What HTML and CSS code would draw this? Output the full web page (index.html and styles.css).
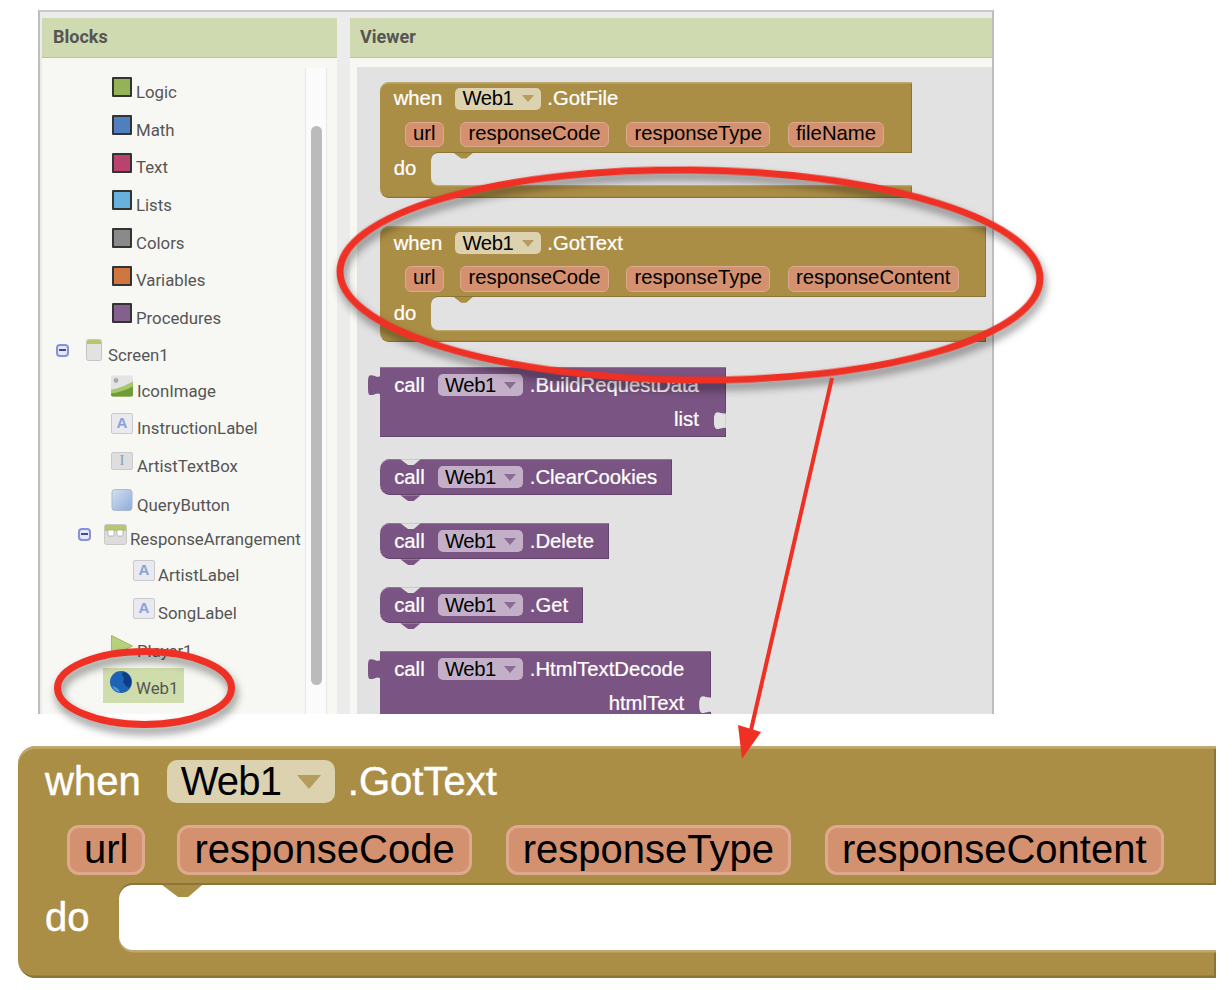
FILE: index.html
```html
<!DOCTYPE html>
<html>
<head>
<meta name="viewport" content="width=device-width, initial-scale=1.0">
<title>Web1 blocks</title>
<link rel="stylesheet" href="styles.css">
</head>
<body>

<div class="page">

  <div class="frame">

    <!--left panel with the component tree-->
    <section class="panel panel-blocks">
      <h2 class="panel-title">Blocks</h2>
      <div class="panel-body tree-wrap">
        <div class="tree">
          <div class="tree-group">
            <div class="tree-row lvl-3"><span class="swatch sw-logic"></span><span class="tree-label">Logic</span></div>
            <div class="tree-row lvl-3"><span class="swatch sw-math"></span><span class="tree-label">Math</span></div>
            <div class="tree-row lvl-3"><span class="swatch sw-text"></span><span class="tree-label">Text</span></div>
            <div class="tree-row lvl-3"><span class="swatch sw-lists"></span><span class="tree-label">Lists</span></div>
            <div class="tree-row lvl-3"><span class="swatch sw-colors"></span><span class="tree-label">Colors</span></div>
            <div class="tree-row lvl-3"><span class="swatch sw-vars"></span><span class="tree-label">Variables</span></div>
            <div class="tree-row lvl-3"><span class="swatch sw-procs"></span><span class="tree-label">Procedures</span></div>
          </div>
          <div class="tree-group tree-group-screen">
            <div class="tree-row lvl-1"><span class="minus minus-wide"></span>
              <svg class="ico ico-screen" viewBox="0 0 16 22"><rect x="0.5" y="0.5" width="15" height="21" rx="2" fill="#e2e2e2" stroke="#c4c4c4"/><path d="M1 5V2.5Q1 1 2.5 1h11Q15 1 15 2.5V5z" fill="#b5c96a"/></svg>
              <span class="tree-label label-screen">Screen1</span></div>
            <div class="tree-row lvl-3">
              <svg class="ico" viewBox="0 0 22 21"><rect width="22" height="21" rx="2" fill="#e4e4e4"/><circle cx="5" cy="5" r="2.4" fill="#a8a8a8"/><path d="M0 14Q9 13 22 6V19Q22 21 20 21H2Q0 21 0 19z" fill="#a6c76c"/><path d="M0 18Q10 17 22 11V19Q22 21 20 21H2Q0 21 0 19z" fill="#6f9a35"/></svg>
              <span class="tree-label">IconImage</span></div>
            <div class="tree-row lvl-3 pitch-37"><span class="letter-ico">A</span><span class="tree-label">InstructionLabel</span></div>
            <div class="tree-row lvl-3 pitch-38"><span class="letter-ico letter-box">I</span><span class="tree-label">ArtistTextBox</span></div>
            <div class="tree-row lvl-3 pitch-39">
              <svg class="ico" viewBox="0 0 22 23"><defs><linearGradient id="btn" x1="0" y1="0" x2="1" y2="1"><stop offset="0" stop-color="#d5e0f2"/><stop offset="1" stop-color="#8fabd8"/></linearGradient></defs><rect x="0.5" y="0.5" width="21" height="22" rx="3" fill="url(#btn)" stroke="#a9b9d2"/></svg>
              <span class="tree-label">QueryButton</span></div>
            <div class="tree-row lvl-2 pitch-34"><span class="minus"></span>
              <svg class="ico ico-arrange" viewBox="0 0 23 21"><rect x="0.5" y="0.5" width="22" height="20" rx="2" fill="#dcdcdc" stroke="#c8c8c8"/><path d="M1 7V2.5Q1 1 2.5 1h18Q22 1 22 2.5V7z" fill="#b4c96c"/><rect x="4" y="6" width="6" height="6" rx="1" fill="#fff" stroke="#999" stroke-width="0.6"/><rect x="13" y="6" width="6" height="6" rx="1" fill="#fff" stroke="#999" stroke-width="0.6"/></svg>
              <span class="tree-label label-tight">ResponseArrangement</span></div>
            <div class="tree-row lvl-4"><span class="letter-ico">A</span><span class="tree-label label-tight">ArtistLabel</span></div>
            <div class="tree-row lvl-4 pitch-38"><span class="letter-ico">A</span><span class="tree-label label-tight">SongLabel</span></div>
            <div class="tree-row lvl-3 pitch-38">
              <svg class="ico" viewBox="0 0 22 22"><path d="M0.5 0.5L21.5 11L0.5 21.5z" fill="#b7d07c" stroke="#a2b86a"/></svg>
              <span class="tree-label">Player1</span></div>
            <div class="tree-row lvl-sel pitch-37">
              <div class="tree-selected">
                <svg class="ico" viewBox="0 0 22 22"><circle cx="11" cy="11" r="11" fill="#1e63b4"/><path d="M13 0.5Q19 2 21 8Q22 13 19 17Q15 15 13 11Q15 7 12 4z" fill="#0d3f86"/><path d="M2 15Q8 16 10 21Q5 21 2 15z" fill="#4f97de"/></svg>
                <span class="tree-label">Web1</span>
              </div>
            </div>
          </div>
        </div>
        <div class="scroll-track"><div class="scroll-thumb"></div></div>
      </div>
    </section>

    <!--right panel with the blocks-->
    <section class="panel panel-viewer">
      <h2 class="panel-title">Viewer</h2>
      <div class="panel-body viewer-body">
        <div class="workspace">

          <div class="block when">
            <div class="row row-head"><span class="kw">when</span><span class="drop">Web1<i class="caret"></i></span><span class="kw meth">.GotFile</span></div>
            <div class="row row-args"><span class="pill pill-first">url</span><span class="pill">responseCode</span><span class="pill">responseType</span><span class="pill">fileName</span></div>
            <div class="row row-do"><span class="kw">do</span><div class="well"></div></div>
          </div>

          <div class="block when">
            <div class="row row-head"><span class="kw">when</span><span class="drop">Web1<i class="caret"></i></span><span class="kw meth">.GotText</span></div>
            <div class="row row-args"><span class="pill pill-first">url</span><span class="pill">responseCode</span><span class="pill">responseType</span><span class="pill">responseContent</span></div>
            <div class="row row-do"><span class="kw">do</span><div class="well"></div></div>
          </div>

          <div class="block call value first-call">
            <div class="row row-call"><span class="kw">call</span><span class="drop">Web1<i class="caret"></i></span><span class="kw meth">.BuildRequestData</span></div>
            <div class="row row-param"><span class="kw">list</span><i class="socket"></i></div>
          </div>

          <div class="block call stmt clear-call">
            <div class="row row-call"><span class="kw">call</span><span class="drop">Web1<i class="caret"></i></span><span class="kw meth">.ClearCookies</span></div>
          </div>

          <div class="block call stmt">
            <div class="row row-call"><span class="kw">call</span><span class="drop">Web1<i class="caret"></i></span><span class="kw meth">.Delete</span></div>
          </div>

          <div class="block call stmt">
            <div class="row row-call"><span class="kw">call</span><span class="drop">Web1<i class="caret"></i></span><span class="kw meth">.Get</span></div>
          </div>

          <div class="block call value">
            <div class="row row-call"><span class="kw">call</span><span class="drop">Web1<i class="caret"></i></span><span class="kw meth">.HtmlTextDecode</span></div>
            <div class="row row-param"><span class="kw">htmlText</span><i class="socket"></i></div>
          </div>

        </div>
      </div>
    </section>

  </div>

  <!--the enlarged copy of the GotText block-->
  <div class="block when big">
    <div class="row row-head"><span class="kw">when</span><span class="drop">Web1<i class="caret"></i></span><span class="kw meth">.GotText</span></div>
    <div class="row row-args"><span class="pill pill-first">url</span><span class="pill">responseCode</span><span class="pill">responseType</span><span class="pill">responseContent</span></div>
    <div class="row row-do"><span class="kw">do</span><div class="well"></div></div>
  </div>

  <!--red annotations drawn over everything-->
  <svg class="marks" viewBox="0 0 1232 990">
    <g class="mark-shadow" fill="none" stroke="#ee3124" stroke-width="7">
      <ellipse cx="690" cy="275" rx="350" ry="105" transform="rotate(0.6 690 275)"/>
      <ellipse cx="144.500" cy="688" rx="87" ry="36.500"/>
    </g>
    <path d="M832 378L751 730" fill="none" stroke="#ee3124" stroke-width="4"/>
    <path d="M742 759L738 725L761 732z" fill="#ee3124"/>
  </svg>

</div>

</body>
</html>
```

FILE: styles.css
```css
* {box-sizing: border-box;}

body {
  margin: 0;
  background: #fff;
  font-family: "Liberation Sans", Arial, sans-serif;
}

.page {
  position: relative;
  width: 1232px;
  height: 990px;
  padding-top: 10px;
  overflow: hidden;
}

/*outer frame and the two panels*/

.frame {
  display: flex;
  gap: 13px;
  width: 956px;
  height: 704px;
  margin-left: 38px;
  padding: 6px 0 0 2px;
  background: #ececec;
  border-top: 2px solid #c9c9c9;
  border-left: 2px solid #bdbdbd;
  border-right: 2px solid #bdbdbd;
  overflow: hidden;
}

.panel {
  display: flex;
  flex-direction: column;
}

.panel-blocks {
  width: 295px;
}

.panel-viewer {
  width: 642px;
}

.panel-title {
  flex: none;
  height: 40px;
  margin: 0;
  padding-left: 11px;
  background: #d0dab0;
  border-bottom: 1px solid #bcc2aa;
  color: #555;
  font: bold 18px/37px Roboto, sans-serif;
}

.panel-viewer .panel-title {
  padding-left: 10px;
}

.panel-body {
  flex: 1;
  min-height: 0;
  background: #f7f8f3;
}

/*component tree*/

.tree-wrap {
  display: flex;
  padding-right: 10px;
}

.tree {
  flex: 1;
  padding-top: 10.500px;
}

.tree-row {
  display: flex;
  align-items: center;
  gap: 4px;
  height: 37.7px;
}

.tree-group-screen .tree-row {
  height: 36px;
}

/*the rows of the screen list are not evenly spaced*/
.pitch-34 {margin-top: -2px;}
.pitch-37 {margin-top: 1px;}
.pitch-38 {margin-top: 2px;}
.pitch-39 {margin-top: 3px;}

.lvl-1 {padding-left: 14px;}
.lvl-2 {padding-left: 36px;}
.lvl-3 {padding-left: 70px;}
.lvl-4 {padding-left: 92px;}
.lvl-sel {padding-left: 61px;}

.tree-label {
  margin-top: 9px;
  color: #555;
  font: 16.800px/20px Roboto, sans-serif;
  white-space: nowrap;
}

.label-screen {
  margin-left: 2px;
}

.label-tight {
  margin-left: -1px;
}

.swatch {
  flex: none;
  width: 20px;
  height: 20px;
  border: 2px solid #333;
  border-radius: 1px;
}

.sw-logic {background: #94b356;}
.sw-math {background: #4f7fbd;}
.sw-text {background: #b9426e;}
.sw-lists {background: #66b2dc;}
.sw-colors {background: #8a8a8a;}
.sw-vars {background: #d0763f;}
.sw-procs {background: #85608f;}

.ico {
  flex: none;
  width: 22px;
  height: 22px;
  margin-left: -1px;
}

.ico-screen {
  width: 16px;
}

.ico-arrange {
  width: 23px;
  height: 21px;
}

.minus {
  flex: none;
  position: relative;
  width: 13px;
  height: 13px;
  margin-right: 10px;
  background: #e4e7f7;
  border: 2px solid #8792d6;
  border-radius: 4px;
}

.minus::before {
  content: "";
  position: absolute;
  left: 1px;
  right: 1px;
  top: 3px;
  height: 2px;
  background: #3d4a9a;
}

.minus-wide {
  margin-right: 14px;
}

.letter-ico {
  flex: none;
  width: 22px;
  height: 21px;
  margin-left: -1px;
  background: #e9e9ee;
  border: 1px solid #c9c9cf;
  border-radius: 2px;
  color: #84a3dc;
  font: bold 15px/18px "Liberation Sans", sans-serif;
  text-align: center;
}

.letter-box {
  height: 18px;
  background: #dedede;
  color: #8c9ec0;
  font: 15px/15px "Liberation Serif", serif;
}

.tree-selected {
  display: flex;
  align-items: flex-start;
  gap: 4px;
  height: 35px;
  margin-top: 5px;
  padding: 3px 6px 0 8px;
  background: #cfdcab;
}

.tree-selected .tree-label {
  margin-top: 7px;
}

.scroll-track {
  flex: none;
  width: 22px;
  margin-top: 10px;
  padding: 58px 4px 0 5px;
  background: #fbfbfb;
  border-left: 1px solid #e8e8e8;
  border-right: 1px solid #e8e8e8;
}

.scroll-thumb {
  height: 559px;
  background: #bbb;
  border-radius: 6px;
}

/*viewer workspace*/

.viewer-body {
  padding: 9px 0 0 7px;
}

.workspace {
  display: flex;
  flex-direction: column;
  align-items: flex-start;
  gap: 28px;
  height: 100%;
  padding: 15px 0 0 23px;
  background: #e2e2e2;
}

.block {
  flex: none;
  position: relative;
  font-size: 20.300px;
  color: #fff;
}

.row {
  display: flex;
  align-items: center;
  white-space: nowrap;
}

.kw {
  flex: none;
  -webkit-text-stroke: .012em #fff;
}

.meth {
  margin-left: .33em;
}

.drop {
  flex: none;
  display: flex;
  align-items: center;
  width: 4.2em;
  height: 1.075em;
  margin-left: .65em;
  padding: 0 .35em;
  border-radius: .25em;
  color: #000;
  letter-spacing: -.02em;
}

.caret {
  width: 0;
  height: 0;
  margin-left: auto;
  border-left: .3em solid transparent;
  border-right: .3em solid transparent;
  border-top: .35em solid;
}

/*brown event blocks*/

.when {
  padding: .3em 0 .62em;
  background: #ab8e45;
  border-radius: .45em 0 0 .45em;
  box-shadow: inset 0 .07em 0 #bfa96f, inset -.05em -.06em 0 #8a7438;
}

.when .drop {
  background: #dcd2b0;
}

.when .caret {
  color: #b59d5f;
}

.row-head {
  height: 1.075em;
  padding-left: .675em;
}

.row-args {
  gap: .88em;
  margin-top: .6em;
  padding: 0 1.37em 0 1.225em;
}

.pill {
  height: 1.25em;
  padding: 0 .35em;
  background: #d3916f;
  border: .08em solid #dfa98f;
  border-radius: .3em;
  color: #000;
  line-height: 1.06em;
}

.pill-first {
  margin-right: -.05em;
}

.row-do {
  height: 1.625em;
  margin-top: .25em;
  padding-left: .675em;
}

.well {
  flex: 1;
  position: relative;
  align-self: stretch;
  margin-left: .74em;
  background: #e2e2e2;
  border-radius: .35em 0 0 .35em;
  box-shadow: 0 -.05em 0 #8a7438, 0 .06em 0 #bfa96f;
}

.well::before {
  content: "";
  position: absolute;
  left: 1.075em;
  top: 0;
  width: 1em;
  height: .3em;
  background: #ab8e45;
  clip-path: polygon(0 0, 100% 0, 65% 100%, 40% 100%);
}

.big {
  width: max-content;
  margin: 32px 0 0 18px;
  padding: .35em 0 .7em;
  font-size: 40px;
}

.big .row-args {
  gap: .85em;
  margin-top: .55em;
  padding-right: 1.32em;
}

.big .well {
  background: #fff;
}

/*purple method blocks*/

.call {
  background: #7a5483;
  box-shadow: inset 0 1px 0 #93749a, inset -1px -1px 0 #64436c;
}

.call .drop {
  background: #c3b0c8;
}

.call .caret {
  color: #8a6b92;
}

.row-call {
  height: 36px;
  padding: 0 .75em 0 .7em;
}

.value .row-call {
  padding-right: 1.33em;
}

.first-call {
  margin-top: -3px;
}

.clear-call {
  margin-top: -6px;
}

.row-param {
  position: relative;
  justify-content: flex-end;
  height: 34px;
  padding: 0 1.33em 2px 0;
}

.value::before {
  content: "";
  position: absolute;
  left: -12px;
  top: 8px;
  width: 12px;
  height: 20px;
  background: #7a5483;
  clip-path: path("M12 1C9 3 7 0 3 0C0 0 0 3 0 10C0 17 0 20 3 20C7 20 9 17 12 19Z");
}

.socket {
  position: absolute;
  right: 0;
  top: 9px;
  width: 12px;
  height: 17px;
  background: #e2e2e2;
  clip-path: path("M12 1C9 2 6 0 4 0C1 0 0 3 0 8.500C0 14 1 17 4 17C6 17 9 15 12 16Z");
}

.stmt {
  border-radius: .5em 0 0 .5em;
}

.stmt::before,
.stmt::after {
  content: "";
  position: absolute;
  left: 1em;
  width: 1em;
  height: .3em;
  clip-path: polygon(0 0, 100% 0, 65% 100%, 40% 100%);
}

.stmt::before {
  top: 0;
  background: #e2e2e2;
}

.stmt::after {
  bottom: -.3em;
  background: #7a5483;
}

/*annotations*/

.marks {
  position: absolute;
  left: 0;
  top: 0;
  width: 1232px;
  height: 990px;
  pointer-events: none;
}

.mark-shadow {
  filter: drop-shadow(2px 6px 4px rgba(0, 0, 0, .45));
}
```
